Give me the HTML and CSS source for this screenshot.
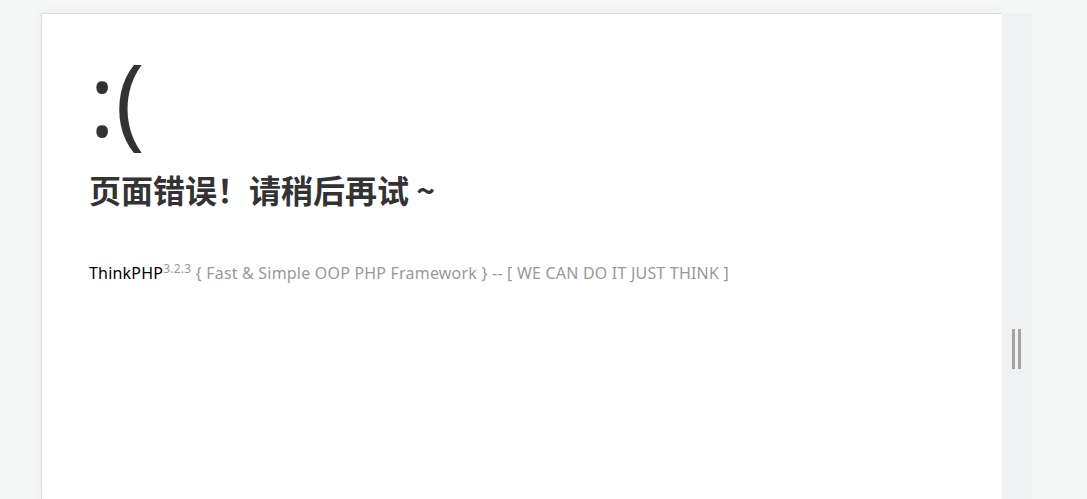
FILE: index.html
```
<!DOCTYPE html>
<html lang="zh-CN">
<head>
<meta charset="utf-8">
<title>系统发生错误</title>
<link rel="stylesheet" href="styles.css">
</head>
<body>
<div class="frame">
  <div class="page">
    <div class="error">
      <p class="face">:(</p>
      <h1>页面错误！请稍后再试 ~</h1>
      <div class="content"></div>
    </div>
    <div class="copyright">
      <p><a class="brand" href="#">ThinkPHP</a><sup>3.2.3</sup> { Fast &amp; Simple OOP PHP Framework } -- [ WE CAN DO IT JUST THINK ]</p>
    </div>
  </div>
  <div class="scroll">
    <div class="handle"><span class="bar"></span><span class="bar"></span></div>
  </div>
</div>
</body>
</html>
```
FILE: styles.css
```
* { margin: 0; padding: 0; box-sizing: border-box; }
html, body { height: 100%; overflow: hidden; }
body {
  background: #f6f7f7;
  font-family: "Noto Sans", "Noto Sans CJK SC", sans-serif;
  color: #333;
  font-size: 16px;
}
.frame {
  display: flex;
  margin: 13px 0 0 41px;
  width: 991px;
  height: 486px;
}
.page {
  flex: 1;
  background: #fff;
  border-left: 1px solid #dcdcdc;
  border-top: 1px solid #dcdcdc;
  box-shadow: 0 0 14px rgba(0, 0, 0, 0.05);
}
.error { padding: 24px 47px; }
.face {
  font-size: 100px;
  font-weight: normal;
  line-height: 120px;
  margin-bottom: 12px;
  font-family: "Open Sans", sans-serif;
  letter-spacing: 0;
}
h1 {
  font-size: 32px;
  line-height: 48px;
  font-weight: bold;
  font-family: "Noto Sans CJK SC", sans-serif;
  margin-top: -5px;
}
.content { padding-top: 13px; }
.copyright { padding: 12px 47px; color: #999; }
.copyright p { line-height: 22px; letter-spacing: 0.2px; }
.brand { color: #000; text-decoration: none; }
sup { font-size: 12px; vertical-align: 6px; line-height: 0; }
.scroll {
  width: 30px;
  margin-top: 1px;
  background: #f0f1f2;
  display: flex;
  justify-content: center;
  padding-top: 315px;
}
.handle { display: flex; gap: 3px; height: 40px; margin-left: -2px; }
.bar { width: 3px; height: 40px; background: #a3a3a3; }
```
